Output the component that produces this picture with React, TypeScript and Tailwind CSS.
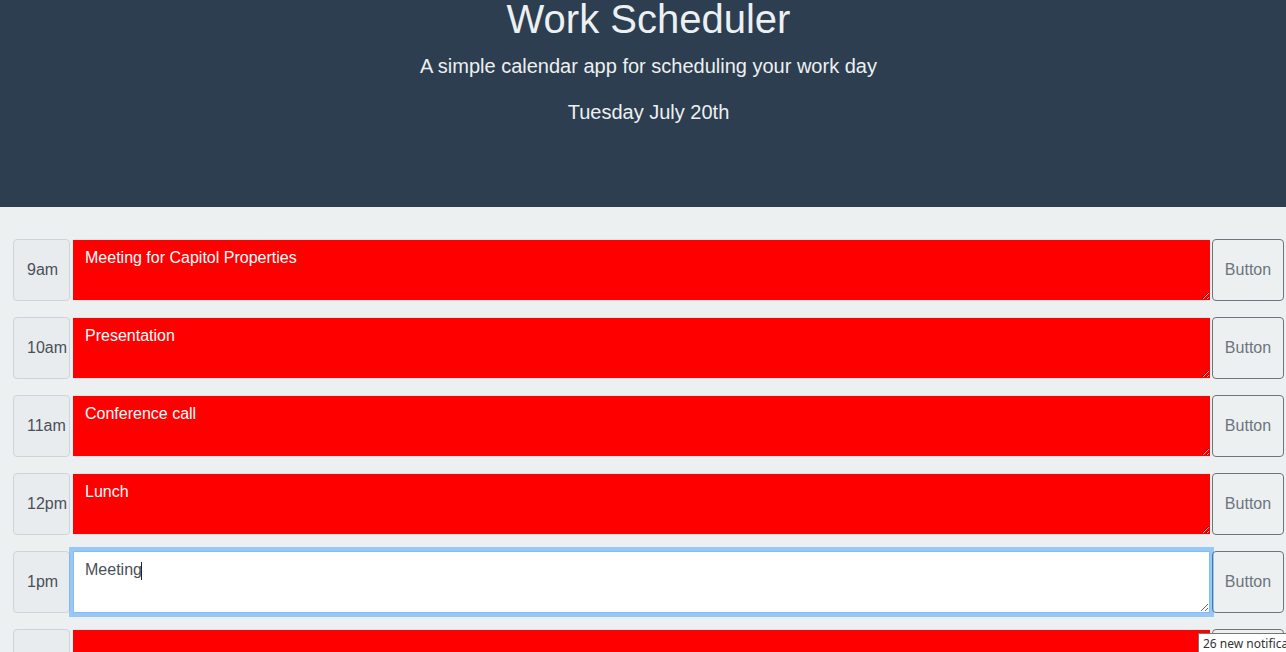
import React from 'react';

type Slot = { hour: string; text: string; state: 'past' | 'present' };

const SLOTS: Slot[] = [
  { hour: '9am', text: 'Meeting for Capitol Properties', state: 'past' },
  { hour: '10am', text: 'Presentation', state: 'past' },
  { hour: '11am', text: 'Conference call', state: 'past' },
  { hour: '12pm', text: 'Lunch', state: 'past' },
  { hour: '1pm', text: 'Meeting', state: 'present' },
  { hour: '2pm', text: '', state: 'past' },
];

function HourRow({ slot }: { slot: Slot }) {
  const focused = slot.state === 'present';
  return (
    <div className="flex items-stretch h-[62px] mb-4 shrink-0">
      <div className="w-[57px] shrink-0 flex items-center pl-[13px] bg-[#e9ecef] border border-[#ced4da] rounded text-[16px] text-[#495057]">
        {slot.hour}
      </div>
      <div className="relative flex-1 ml-[3px] mr-[2px] z-10">
        <textarea
          readOnly
          value={slot.text}
          className={
            focused
              ? 'block w-full h-[62px] pl-[11px] pr-3 py-[6px] text-[16px] leading-6 bg-white text-[#495057] border border-[#80bdff] shadow-[0_0_0_4px_rgba(0,123,255,0.35)] outline-none'
              : 'block w-full h-[62px] px-3 py-[6px] text-[16px] leading-6 bg-[#ff0000] text-white border-y border-x-0 border-[#dfe3e6] outline-none'
          }
        />
        {focused && (
          <span className="absolute left-[68px] top-[11px] w-px h-[18px] bg-[#222]" />
        )}
      </div>
      <button className="w-[72px] shrink-0 border border-[#6c757d] rounded text-[16px] text-[#6c757d] bg-transparent">
        Button
      </button>
    </div>
  );
}

export default function App() {
  return (
    <div
      className="relative h-[652px] overflow-hidden bg-[#ecf0f1]"
      style={{ fontFamily: '"Liberation Sans", Arial, sans-serif' }}
    >
      <header className="h-[207px] bg-[#2c3e50] text-[#ecf0f1] flex flex-col items-center pl-[11px]">
        <h1 className="text-[40px] leading-[40px] -mt-px">Work Scheduler</h1>
        <p className="text-[20px] leading-6 mt-[15px]">A simple calendar app for scheduling your work day</p>
        <p className="text-[20px] leading-6 mt-[22px]">Tuesday July 20th</p>
      </header>

      <main className="flex flex-col pt-8 pl-[13px] pr-[2px]">
        {SLOTS.map((slot) => (
          <HourRow key={slot.hour} slot={slot} />
        ))}
      </main>

      <div
        className="absolute left-[1198px] top-[633px] z-20 bg-white border border-[#767676] px-1 py-[2px] text-[12px] leading-[15px] text-[#333] whitespace-nowrap"
        style={{ fontFamily: '"Noto Sans", "DejaVu Sans", sans-serif' }}
      >
        26 new notifications
      </div>
    </div>
  );
}
